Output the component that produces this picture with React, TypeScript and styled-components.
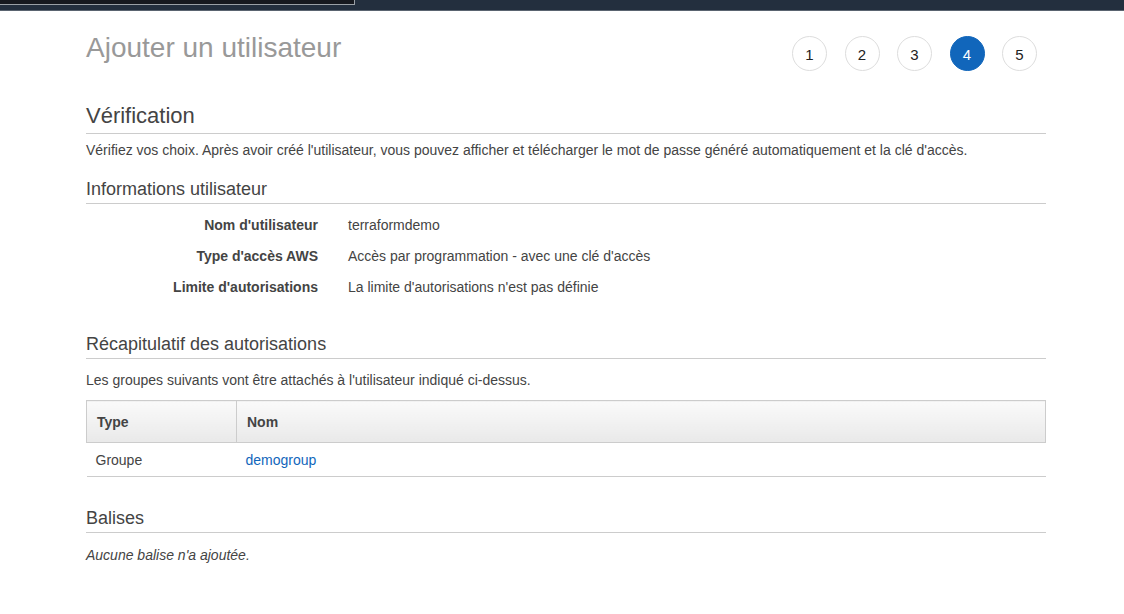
import * as React from 'react';
import styled, { createGlobalStyle } from 'styled-components';

const GlobalStyle = createGlobalStyle`
  html, body {
    margin: 0;
    padding: 0;
    background: #fff;
    font-family: "Liberation Sans", Arial, Helvetica, sans-serif;
    color: #444;
  }
`;

const steps = [1, 2, 3, 4, 5];

const userInfo = [
  { label: "Nom d'utilisateur", value: 'terraformdemo' },
  { label: "Type d'accès AWS", value: "Accès par programmation - avec une clé d'accès" },
  { label: "Limite d'autorisations", value: "La limite d'autorisations n'est pas définie" },
];

export default function App() {
  return (
    <>
      <GlobalStyle />
      <TopBar>
        <TopMenu />
      </TopBar>
      <Page>
        <Header>
          <Title>Ajouter un utilisateur</Title>
          <Steps>
            {steps.map((n) => (
              <Step key={n} active={n === 4}>{n}</Step>
            ))}
          </Steps>
        </Header>

        <PageHeading>Vérification</PageHeading>
        <Paragraph top={7}>
          Vérifiez vos choix. Après avoir créé l'utilisateur, vous pouvez afficher et télécharger le mot de passe généré automatiquement et la clé d'accès.
        </Paragraph>

        <SectionHeading top={18}>Informations utilisateur</SectionHeading>
        <InfoList>
          {userInfo.map((row) => (
            <InfoRow key={row.label}>
              <InfoLabel>{row.label}</InfoLabel>
              <InfoValue>{row.value}</InfoValue>
            </InfoRow>
          ))}
        </InfoList>

        <SectionHeading top={36}>Récapitulatif des autorisations</SectionHeading>
        <Paragraph top={12}>Les groupes suivants vont être attachés à l'utilisateur indiqué ci-dessus.</Paragraph>
        <Table>
          <thead>
            <tr>
              <Th width={150}>Type</Th>
              <Th>Nom</Th>
            </tr>
          </thead>
          <tbody>
            <tr>
              <Td>Groupe</Td>
              <Td><Link href="#">demogroup</Link></Td>
            </tr>
          </tbody>
        </Table>

        <SectionHeading top={29}>Balises</SectionHeading>
        <Note>Aucune balise n'a ajoutée.</Note>
      </Page>
    </>
  );
}

const TopBar = styled.div`
  height: 10px;
  background: #232f3e;
  border-bottom: 1px solid #5a6470;
`;
const TopMenu = styled.div`
  width: 354px;
  height: 4px;
  background: #16191f;
  border-right: 1px solid #9aa0a6;
  border-bottom: 1px solid #9aa0a6;
`;
const Page = styled.div`
  width: 960px;
  margin: 0 0 0 86px;
`;
const Header = styled.div`
  display: flex;
  justify-content: space-between;
  align-items: flex-start;
  height: 91px;
`;
const Title = styled.h1`
  margin: 21px 0 0;
  font-size: 28px;
  font-weight: normal;
  line-height: 32px;
  color: #999;
`;
const Steps = styled.div`
  display: flex;
  gap: 17.5px;
  margin: 25px 9px 0 0;
`;
const Step = styled.div<{ active?: boolean }>`
  width: 35px;
  height: 35px;
  box-sizing: border-box;
  border-radius: 50%;
  border: 1px solid ${(p) => (p.active ? '#1166bb' : '#ddd')};
  background: ${(p) => (p.active ? '#1166bb' : '#fff')};
  color: ${(p) => (p.active ? '#fff' : '#222')};
  font-size: 15px;
  display: flex;
  align-items: center;
  justify-content: center;
  padding-top: 2px;
`;
const PageHeading = styled.h2`
  margin: 0;
  font-size: 22px;
  font-weight: normal;
  line-height: 28px;
  color: #444;
  padding-bottom: 3px;
  border-bottom: 1px solid #ccc;
`;
const Paragraph = styled.p<{ top: number }>`
  margin: ${(p) => p.top}px 0 0;
  font-size: 14px;
  line-height: 18px;
  color: #444;
`;
const SectionHeading = styled.h3<{ top: number }>`
  margin: ${(p) => p.top}px 0 0;
  font-size: 18px;
  font-weight: normal;
  line-height: 24px;
  color: #444;
  padding-bottom: 2px;
  border-bottom: 1px solid #ccc;
`;
const InfoList = styled.div`
  display: flex;
  flex-direction: column;
  gap: 13px;
  padding-top: 12px;
`;
const InfoRow = styled.div`
  display: flex;
  gap: 30px;
  font-size: 14px;
  line-height: 18px;
`;
const InfoLabel = styled.div`
  width: 232px;
  text-align: right;
  font-weight: bold;
  color: #444;
`;
const InfoValue = styled.div`
  color: #444;
`;
const Table = styled.table`
  width: 100%;
  margin-top: 11px;
  border-collapse: collapse;
  font-size: 14px;
`;
const Th = styled.th<{ width?: number }>`
  width: ${(p) => (p.width ? `${p.width}px` : 'auto')};
  height: 42px;
  box-sizing: border-box;
  padding: 0 10px;
  text-align: left;
  font-weight: bold;
  color: #444;
  background: linear-gradient(#fafafa, #e9e9e9);
  border: 1px solid #ccc;
`;
const Td = styled.td`
  height: 33px;
  padding: 0 9px;
  color: #444;
  border-bottom: 1px solid #ccc;
`;
const Link = styled.a`
  color: #1166bb;
  text-decoration: none;
`;
const Note = styled.p`
  margin: 14px 0 0;
  font-size: 14px;
  font-style: italic;
  color: #444;
`;
